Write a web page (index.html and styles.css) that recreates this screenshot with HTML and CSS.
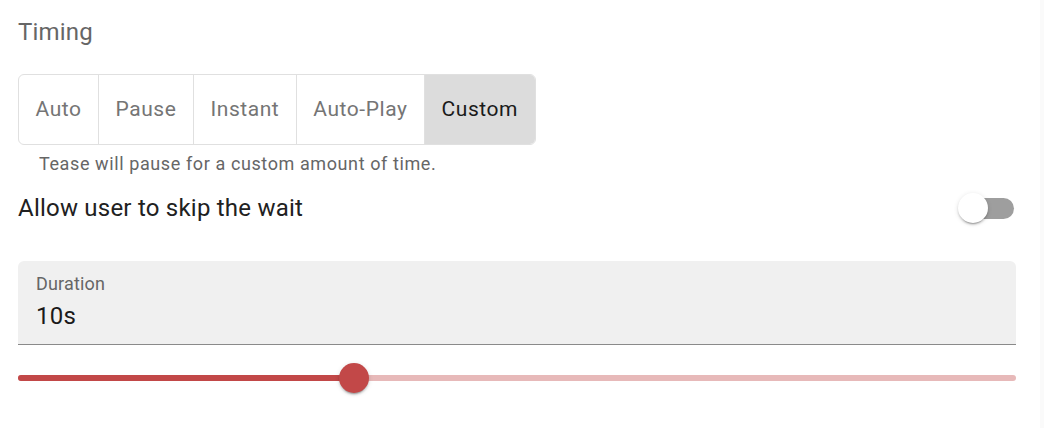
FILE: index.html
```html
<!DOCTYPE html>
<html>
<head>
<meta charset="utf-8">
<link rel="stylesheet" href="styles.css">
</head>
<body>
<div class="page">
  <main class="main">
    <div class="title">Timing</div>
    <div class="toggle-group">
      <div class="toggle">Auto</div>
      <div class="toggle">Pause</div>
      <div class="toggle">Instant</div>
      <div class="toggle">Auto-Play</div>
      <div class="toggle selected">Custom</div>
    </div>
    <div class="helper">Tease will pause for a custom amount of time.</div>
    <div class="switch-row">
      <span class="switch-label">Allow user to skip the wait</span>
      <span class="switch">
        <span class="switch-track"></span>
        <span class="switch-thumb"></span>
      </span>
    </div>
    <div class="field">
      <div class="field-label">Duration</div>
      <div class="field-value">10s</div>
    </div>
    <div class="slider">
      <div class="slider-rail"></div>
      <div class="slider-track" style="width: 33.67%"></div>
      <div class="slider-thumb" style="left: calc(33.67% - 15px)"></div>
    </div>
  </main>
  <div class="edge"></div>
</div>
</body>
</html>
```

FILE: styles.css
```css
html, body {
  margin: 0;
  padding: 0;
  background: #ffffff;
}
body {
  font-family: Roboto, "Liberation Sans", Arial, sans-serif;
}
.page {
  display: flex;
  width: 1044px;
  height: 428px;
}
.main {
  width: 998px;
  padding: 0 24px 0 18px;
  display: flex;
  flex-direction: column;
}
.edge {
  width: 4px;
  background: #fafafa;
}
.title {
  margin-top: 16px;
  font-size: 24px;
  line-height: 32px;
  letter-spacing: 0.2px;
  color: #666666;
}
.toggle-group {
  margin-top: 26px;
  display: flex;
  align-self: flex-start;
  border: 1px solid #e0e0e0;
  border-radius: 6px;
  overflow: hidden;
  height: 69px;
}
.toggle {
  display: flex;
  align-items: center;
  padding: 0 16.5px 2px;
  font-size: 21px;
  letter-spacing: 0.56px;
  color: #757575;
  border-left: 1px solid #e0e0e0;
}
.toggle:first-child {
  border-left: none;
}
.toggle.selected {
  background: #dcdcdc;
  color: #1a1a1a;
}
.helper {
  margin-top: 4px;
  padding-left: 21px;
  font-size: 18px;
  line-height: 30px;
  letter-spacing: 0.6px;
  color: #666666;
}
.switch-row {
  margin-top: 0;
  height: 58px;
  display: flex;
  align-items: center;
  justify-content: space-between;
}
.switch-label {
  font-size: 24px;
  letter-spacing: 0.225px;
  color: #212121;
}
.switch {
  position: relative;
  width: 56px;
  height: 30px;
  margin-right: 2px;
}
.switch-track {
  position: absolute;
  left: 4.5px;
  top: 4.5px;
  width: 51px;
  height: 21px;
  border-radius: 10.5px;
  background: #9e9e9e;
}
.switch-thumb {
  position: absolute;
  left: 0;
  top: 0;
  width: 30px;
  height: 30px;
  border-radius: 50%;
  background: #ffffff;
  box-shadow: 0 3px 1px -2px rgba(0,0,0,0.2), 0 2px 2px 0 rgba(0,0,0,0.14), 0 1px 5px 0 rgba(0,0,0,0.12);
}
.field {
  margin-top: 24px;
  height: 83px;
  background: #f0f0f0;
  border-radius: 6px 6px 0 0;
  border-bottom: 1px solid #8a8a8a;
  padding: 0 18px;
  display: flex;
  flex-direction: column;
}
.field-label {
  margin-top: 10px;
  font-size: 18px;
  line-height: 26px;
  letter-spacing: 0.17px;
  color: #666666;
}
.field-value {
  margin-top: 2px;
  font-size: 24px;
  line-height: 34px;
  letter-spacing: 0.225px;
  color: #1a1a1a;
}
.slider {
  position: relative;
  margin-top: 18px;
  height: 30px;
}
.slider-rail {
  position: absolute;
  left: 0;
  right: 0;
  top: 12px;
  height: 6px;
  border-radius: 3px;
  background: #e7b9b9;
}
.slider-track {
  position: absolute;
  left: 0;
  top: 12px;
  height: 6px;
  border-radius: 3px;
  background: #c24848;
}
.slider-thumb {
  position: absolute;
  top: 0;
  width: 30px;
  height: 30px;
  border-radius: 50%;
  background: #c24848;
  box-shadow: 0 3px 1px -2px rgba(0,0,0,0.2), 0 2px 2px 0 rgba(0,0,0,0.14), 0 1px 5px 0 rgba(0,0,0,0.12);
}
```
